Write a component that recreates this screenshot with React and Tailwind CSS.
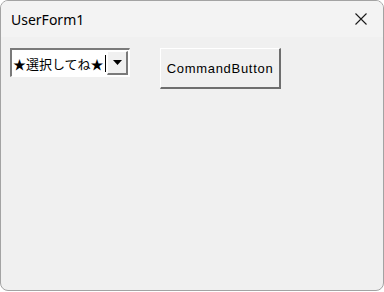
import React from 'react';

function ComboBox() {
  return (
    <div className="flex h-[29px] w-[120px] border-t-2 border-l-2 border-t-[#7a7a7a] border-l-[#7a7a7a] border-b border-r border-b-white border-r-white bg-white">
      <div className="flex min-w-0 flex-1 items-center whitespace-nowrap pl-[1px] text-[13px] leading-none text-black [font-family:'Noto_Sans_CJK_JP',sans-serif]">
        ★選択してね★<span className="ml-[1px] h-[17px] w-px shrink-0 bg-black" />
      </div>
      <div className="m-[1px] flex w-[21px] shrink-0 items-center justify-center border-t border-l border-white border-b-2 border-r-2 border-b-[#7a7a7a] border-r-[#7a7a7a] bg-[#f0f0f0]">
        <svg width="9" height="5" viewBox="0 0 9 5">
          <path d="M0 0h9L4.5 5z" fill="#000" />
        </svg>
      </div>
    </div>
  );
}

function App() {
  return (
    <div className="h-[292px] w-[384px] bg-white">
      <div className="flex h-[291px] w-[384px] flex-col overflow-hidden rounded-lg border border-[#a3a3a3] bg-[#f0f0f0]">
        {/* title bar */}
        <div className="flex h-[36px] items-center justify-between bg-[#f3f3f3] pl-[10px] pr-[16px]">
          <span className="text-[14px] text-black [font-family:'Noto_Sans',sans-serif]">UserForm1</span>
          <svg width="12" height="12" viewBox="0 0 12 12">
            <path d="M0.5 0.5l11 11M11.5 0.5l-11 11" stroke="#1a1a1a" strokeWidth="1.1" />
          </svg>
        </div>
        {/* body */}
        <div className="flex items-start gap-[30px] pl-[9px] pt-[11px]">
          <ComboBox />
          <button className="h-[41px] w-[121px] border-t border-l border-white border-b-2 border-r-2 border-b-[#6e6e6e] border-r-[#6e6e6e] bg-[#f0f0f0] pt-[2px] text-[13px] tracking-[0.7px] text-black [font-family:'Liberation_Sans',sans-serif]">
            CommandButton
          </button>
        </div>
      </div>
    </div>
  );
}

export default App;
